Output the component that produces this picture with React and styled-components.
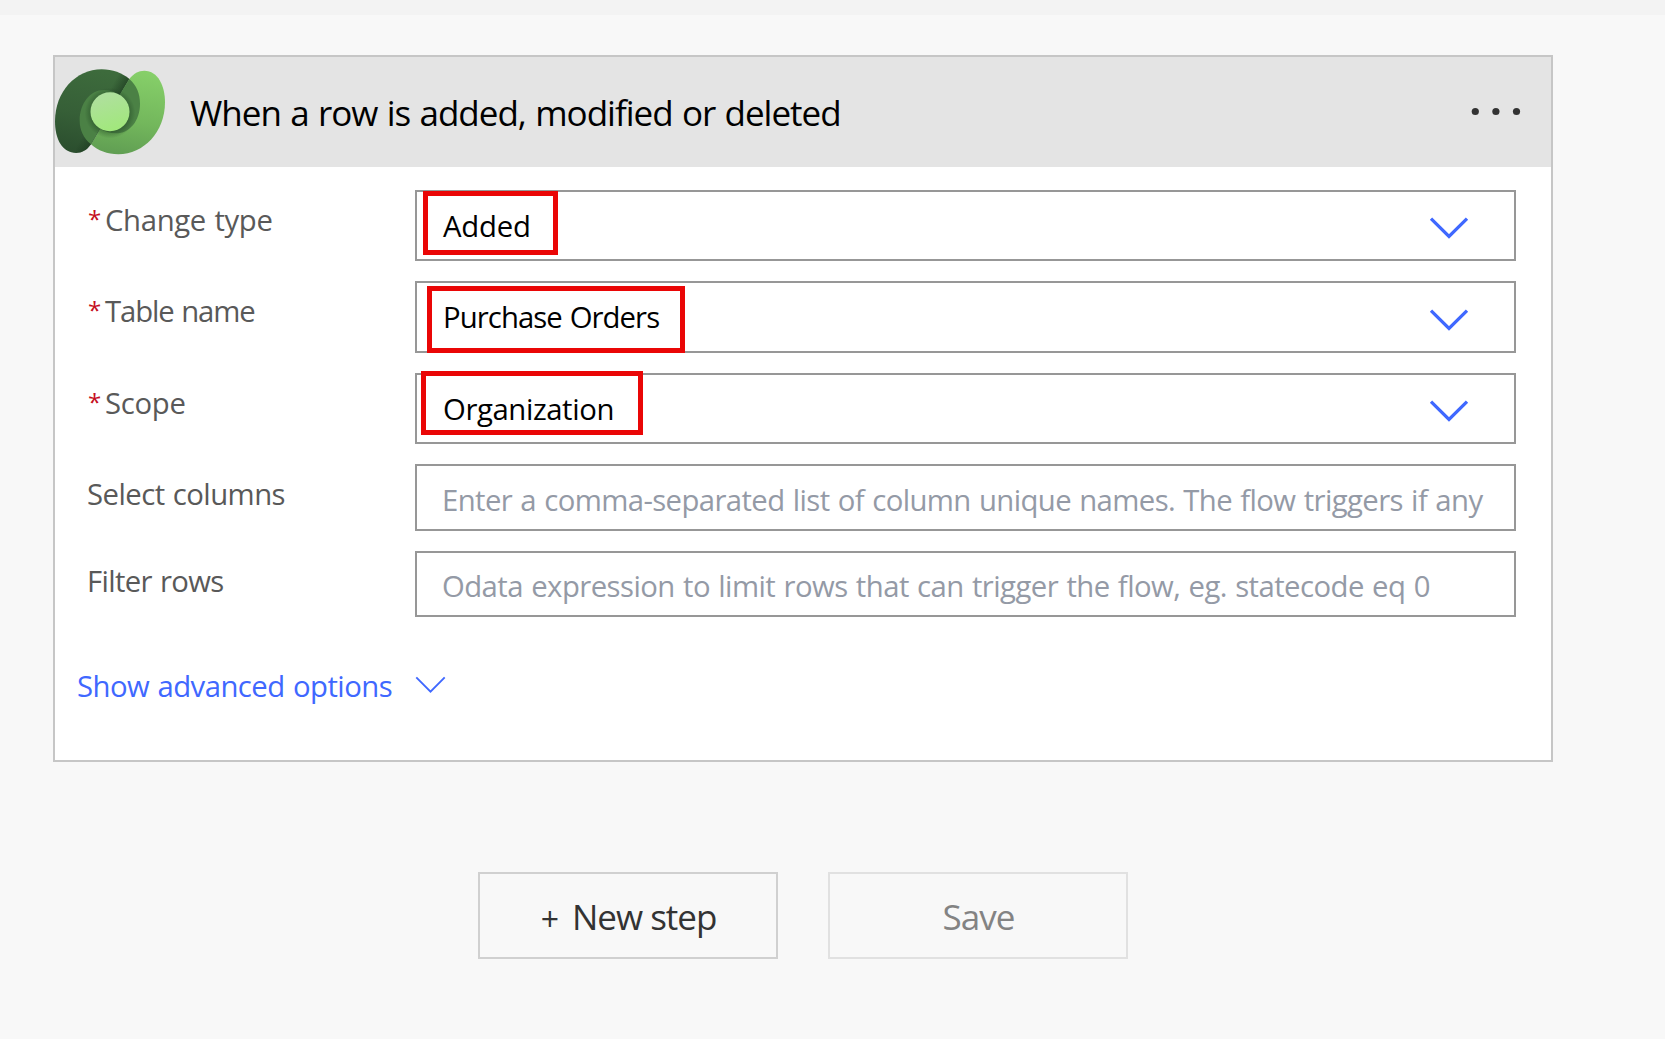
import React from "react";
import styled, { createGlobalStyle } from "styled-components";

const GlobalStyle = createGlobalStyle`
  *, *::before, *::after { box-sizing: border-box; }
  body {
    margin: 0;
    background: #f8f8f8;
    font-family: "Open Sans", "Noto Sans", sans-serif;
    word-spacing: 1.2px;
    overflow: hidden;
  }
`;

const Page = styled.main`
  height: 1039px;
  display: flex;
  flex-direction: column;
  background: #f8f8f8;
`;

const TopStrip = styled.div`
  height: 15px;
  flex: none;
  background: #f3f3f3;
`;

const Canvas = styled.div`
  width: 1606px;
  padding: 40px 53px 0;
`;

const Card = styled.section`
  width: 1500px;
  height: 707px;
  border: 2px solid #c6c6c6;
  background: #fff;
`;

const CardHeader = styled.header`
  display: flex;
  align-items: center;
  height: 110px;
  padding-right: 28px;
  background: #e4e4e4;
`;

const Title = styled.h1`
  flex: 1;
  margin: 0;
  padding: 2px 0 0 25px;
  font-size: 35px;
  font-weight: 400;
  line-height: 48px;
  letter-spacing: -1px;
  color: #000;
`;

const MenuButton = styled.button`
  display: flex;
  padding: 0;
  border: 0;
  background: none;
`;

const CardBody = styled.div`
  padding: 23px 35px 0 33px;
`;

const Fields = styled.div`
  display: flex;
  flex-direction: column;
  gap: 20px;
`;

const Row = styled.div`
  display: grid;
  grid-template-columns: 327px 1fr;
  height: ${(p) => p.$height}px;
`;

const Label = styled.label`
  display: flex;
  padding-top: 10px;
  margin-left: ${(p) => (p.$inset ? 0 : -1)}px;
  font-size: 29.3px;
  line-height: 41px;
  letter-spacing: ${(p) => p.$tracking}px;
  color: #595959;
`;

const Required = styled.span`
  width: 17px;
  font-size: 24px;
  line-height: 38px;
  color: #c50f1f;
`;

const Field = styled.div`
  position: relative;
  display: flex;
  align-items: center;
  justify-content: space-between;
  padding: 0 45px 0 26px;
  border: 2px solid #979797;
  background: #fff;
`;

const Value = styled.span`
  font-size: 29.3px;
  line-height: 40px;
  letter-spacing: ${(p) => p.$tracking}px;
  white-space: nowrap;
  color: #000;
`;

const TextField = styled.input`
  width: 100%;
  padding: 4px 0 0 25px;
  border: 2px solid #979797;
  border-radius: 0;
  background: #fff;
  font-family: inherit;
  font-size: 29.3px;
  letter-spacing: ${(p) => p.$tracking}px;
  word-spacing: 1.2px;
  outline: none;
  &::placeholder {
    color: #949aa6;
    opacity: 1;
  }
`;

const Highlight = styled.span`
  position: absolute;
  left: ${(p) => p.$left}px;
  top: ${(p) => p.$top}px;
  width: ${(p) => p.$width}px;
  height: ${(p) => p.$height}px;
  border: 5px solid #ea0606;
  pointer-events: none;
`;

const DropdownIcon = styled.svg`
  flex: none;
  width: 40px;
  height: 24px;
  margin-top: 5px;
`;

const AdvancedLink = styled.a`
  display: flex;
  align-items: center;
  gap: 23px;
  margin: 48px 0 0 -11px;
  font-size: 29.3px;
  line-height: 42px;
  letter-spacing: -0.54px;
  color: #3f68ff;

  svg {
    margin-bottom: 2px;
  }
`;

const Actions = styled.div`
  display: flex;
  justify-content: center;
  gap: 50px;
  padding-top: 110px;
`;

const ActionButton = styled.button`
  display: flex;
  align-items: center;
  justify-content: center;
  gap: 13px;
  width: 300px;
  height: 87px;
  padding: 3px 0 0 1px;
  border: 2px solid ${(p) => (p.disabled ? "#e1e1e1" : "#d0d0d0")};
  background: #f8f8f8;
  font-family: inherit;
  font-size: 35px;
  line-height: 48px;
  letter-spacing: -1px;
  color: ${(p) => (p.disabled ? "#838383" : "#333")};
`;

const Plus = styled.span`
  font-size: 32px;
  letter-spacing: 0;
  padding-top: 3px;
`;

function DataverseLogo() {
  return (
    <svg width="110" height="110" viewBox="15 -9 330 330" aria-hidden="true">
      <defs>
        <linearGradient id="dark" x1="0.5" y1="0" x2="0.3" y2="1">
          <stop offset="0" stopColor="#3d6b3c" />
          <stop offset="0.55" stopColor="#365f37" />
          <stop offset="1" stopColor="#2b4e2e" />
        </linearGradient>
        <linearGradient id="light" x1="0.6" y1="0" x2="0.45" y2="1">
          <stop offset="0" stopColor="#86cf69" />
          <stop offset="0.6" stopColor="#73b75c" />
          <stop offset="1" stopColor="#619f53" />
        </linearGradient>
        <linearGradient id="core" x1="0.3" y1="0" x2="0.6" y2="1">
          <stop offset="0" stopColor="#b0dfa0" />
          <stop offset="1" stopColor="#a1e87b" />
        </linearGradient>
        <radialGradient id="shade" gradientUnits="userSpaceOnUse" cx="180" cy="159" r="76">
          <stop offset="0.7" stopColor="#183a1c" stopOpacity="0.45" />
          <stop offset="1" stopColor="#183a1c" stopOpacity="0" />
        </radialGradient>
        <linearGradient id="fold" gradientUnits="userSpaceOnUse" x1="222" y1="82" x2="192" y2="66">
          <stop offset="0" stopColor="#142e18" stopOpacity="0.5" />
          <stop offset="1" stopColor="#142e18" stopOpacity="0" />
        </linearGradient>
        <linearGradient id="foldLow" gradientUnits="userSpaceOnUse" x1="136" y1="229" x2="108" y2="212">
          <stop offset="0" stopColor="#142e18" stopOpacity="0.4" />
          <stop offset="1" stopColor="#142e18" stopOpacity="0" />
        </linearGradient>
        <clipPath id="bodyClip">
          <path d="M155 28C188 28 216 39 238 57C251 40 265 32 283 32C324 32 345 78 345 127C345 216 281 283 205 283C171 283 144 272 123 253C110 271 96 279 78 279C38 279 15 240 15 184C15 95 78 28 155 28Z" />
        </clipPath>
      </defs>
      <path fill="url(#light)" d="M283 32C324 32 345 78 345 127C345 216 281 283 205 283C171 283 144 272 123 253L238 57C251 40 265 32 283 32Z" />
      <path fill="url(#dark)" d="M155 28C188 28 216 39 238 57L123 253C110 271 96 279 78 279C38 279 15 240 15 184C15 95 78 28 155 28Z" />
      <path fill="url(#fold)" d="M160 28C190 28 216 39 238 57L205 113L150 90Z" />
      <path fill="url(#foldLow)" d="M89 180L150 207L123 253C110 271 96 279 78 279Z" />
      <path fill="#4b8145" d="M238 57C260 76 270 102 270 131C270 182 239 220 198 220C180 220 163 214 150 206L123 253C101 235 89 211 89 181C89 130 121 90 162 90C180 90 196 96 208 106Z" />
      <circle cx="180" cy="159" r="76" fill="url(#shade)" clipPath="url(#bodyClip)" />
      <circle cx="180" cy="155" r="58.5" fill="url(#core)" />
    </svg>
  );
}

function Chevron() {
  return (
    <DropdownIcon viewBox="0 0 40 24" fill="none" stroke="#3f68ff" strokeWidth="3.3" aria-hidden="true">
      <path d="M2 2.6L20 20.4L38 2.6" />
    </DropdownIcon>
  );
}

const dropdowns = [
  { label: "Change type", labelTracking: -0.35, value: "Added", tracking: -0.2, height: 71, mark: [6, -1, 135, 64] },
  { label: "Table name", labelTracking: -1.12, value: "Purchase Orders", tracking: -0.93, height: 72, mark: [10, 3, 258, 67] },
  { label: "Scope", labelTracking: -0.3, value: "Organization", tracking: -0.4, height: 71, mark: [4, -4, 222, 64] },
];

const inputs = [
  {
    label: "Select columns",
    labelTracking: -0.55,
    placeholder: "Enter a comma-separated list of column unique names. The flow triggers if any",
    tracking: -0.6,
    height: 67,
  },
  {
    label: "Filter rows",
    labelTracking: -0.67,
    placeholder: "Odata expression to limit rows that can trigger the flow, eg. statecode eq 0",
    tracking: -0.55,
    height: 66,
  },
];

export default function App() {
  return (
    <Page>
      <GlobalStyle />
      <TopStrip />
      <Canvas>
        <Card>
          <CardHeader>
            <DataverseLogo />
            <Title>When a row is added, modified or deleted</Title>
            <MenuButton aria-label="More commands">
              <svg width="56" height="12" viewBox="0 0 56 12" fill="#333">
                <circle cx="8.3" cy="5.5" r="3.6" />
                <circle cx="28.9" cy="5.5" r="3.6" />
                <circle cx="49.5" cy="5.5" r="3.6" />
              </svg>
            </MenuButton>
          </CardHeader>
          <CardBody>
            <Fields>
              {dropdowns.map((d) => (
                <Row key={d.label} $height={d.height}>
                  <Label $inset $tracking={d.labelTracking}>
                    <Required>*</Required>
                    {d.label}
                  </Label>
                  <Field>
                    <Value $tracking={d.tracking}>{d.value}</Value>
                    <Chevron />
                    <Highlight $left={d.mark[0]} $top={d.mark[1]} $width={d.mark[2]} $height={d.mark[3]} />
                  </Field>
                </Row>
              ))}
              {inputs.map((f) => (
                <Row key={f.label} $height={f.height}>
                  <Label $tracking={f.labelTracking}>{f.label}</Label>
                  <TextField placeholder={f.placeholder} $tracking={f.tracking} />
                </Row>
              ))}
            </Fields>
            <AdvancedLink>
              Show advanced options
              <svg width="31" height="18" viewBox="0 0 31 18" fill="none" stroke="#3f68ff" strokeWidth="1.9">
                <path d="M1.3 1.4L15.5 15.6L29.7 1.4" />
              </svg>
            </AdvancedLink>
          </CardBody>
        </Card>
        <Actions>
          <ActionButton>
            <Plus>+</Plus>
            New step
          </ActionButton>
          <ActionButton disabled>Save</ActionButton>
        </Actions>
      </Canvas>
    </Page>
  );
}
